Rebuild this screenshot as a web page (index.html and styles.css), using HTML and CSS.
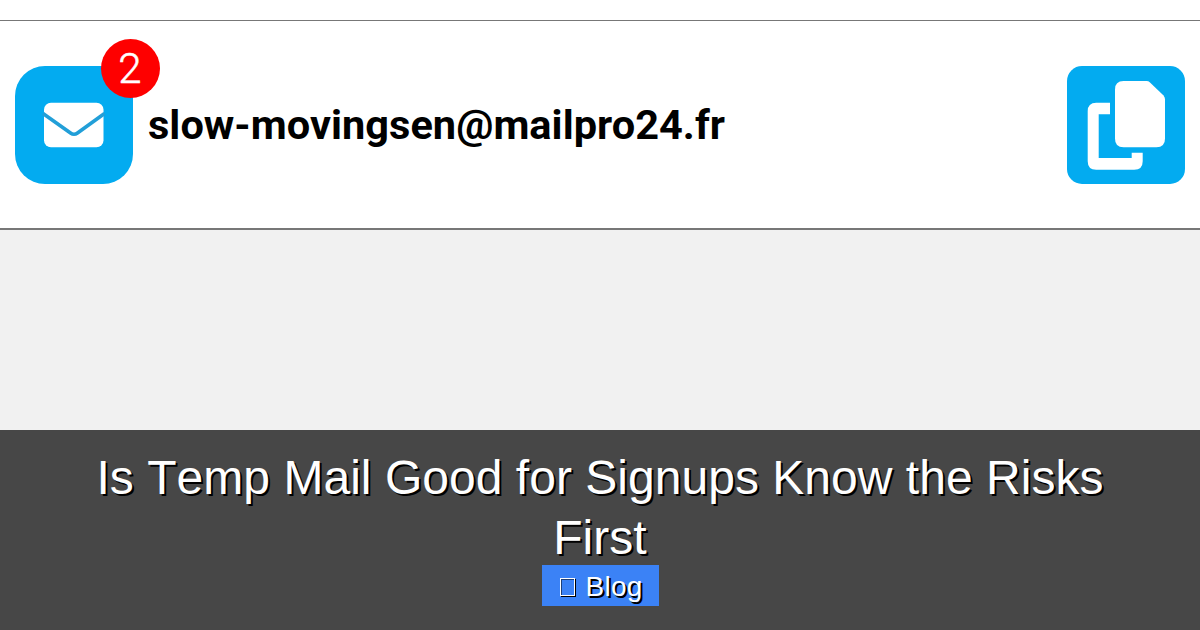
FILE: index.html
```html
<!doctype html>
<html lang="en">
  <head>
    <meta charset="UTF-8">
    <meta name="viewport" content="width=device-width, initial-scale=1.0">
    <title>Is Temp Mail Good for Signups Know the Risks First</title>
    <link rel="stylesheet" href="styles.css">
  </head>
  <body>
    <div class="page">
      <!-- Mailbox address bar -->
      <header class="mailbox">
        <div class="mail-icon">
          <svg width="118" height="118" viewBox="0 0 118 118">
            <rect x="29" y="36.7" width="59.5" height="44.6" rx="7" fill="#fff"/>
            <path d="M28 47.5 L55.5 67 Q59 69.5 62.5 67 L89.5 47.5" fill="none" stroke="#229fd8" stroke-width="3.6"/>
          </svg>
          <span class="badge">2</span>
        </div>
        <div class="address">slow-movingsen@mailpro24.fr</div>
        <div class="copy-icon">
          <svg width="118" height="118" viewBox="0 0 118 118" fill="#fff">
            <path d="M43 36.7 V48.3 H31.7 V92 H64.7 V86.7 H75.7 V95.2 Q75.7 103.7 67.2 103.7 H29.2 Q20.7 103.7 20.7 95.2 V45.2 Q20.7 36.7 29.2 36.7 Z"/>
            <path d="M56.5 15 H79.5 Q81.5 15 83 16.4 L96.3 29.2 Q98 31 98 33.2 V72.8 Q98 81.3 89.5 81.3 H56.5 Q48 81.3 48 72.8 V23.5 Q48 15 56.5 15 Z"/>
          </svg>
        </div>
      </header>

      <!-- Post title -->
      <div class="caption">
        <h1>Is Temp Mail Good for Signups Know the Risks First</h1>
        <div class="tag"><span class="tag-box"></span>Blog</div>
      </div>
    </div>
  </body>
</html>
```

FILE: styles.css
```css
body {
  margin: 0;
  background-color: #fff;
  font-family: "Liberation Sans", Arial, sans-serif;
}
.page {
  display: flex;
  flex-direction: column;
  box-sizing: border-box;
  height: 630px;
  padding-top: 20px;
  overflow: hidden;
  background: linear-gradient(#fff 20px, #f1f1f1 20px);
}
.mailbox {
  display: flex;
  align-items: center;
  box-sizing: border-box;
  height: 210px;
  padding: 0 15px;
  border-top: 1px solid #777;
  border-bottom: 2px solid #777;
  background-color: #fff;
}
.mail-icon, .copy-icon {
  width: 118px;
  height: 118px;
  background-color: #03abf0;
}
.mail-icon {
  position: relative;
  border-radius: 30px;
}
.copy-icon {
  margin-left: auto;
  border-radius: 15px;
}
.mail-icon svg, .copy-icon svg {
  display: block;
}
.badge {
  position: absolute;
  top: -26.5px;
  left: 85.5px;
  width: 59px;
  height: 59px;
  border-radius: 50%;
  background-color: #fe0000;
  color: #fff;
  font: 300 42px/59px Roboto, sans-serif;
  -webkit-text-stroke: 0.5px #fff;
  text-align: center;
}
.address {
  margin-left: 15px;
  color: #000;
  font: bold 41.5px/50px Roboto, sans-serif;
  letter-spacing: 0.04px;
}
.caption {
  box-sizing: border-box;
  height: 200px;
  margin-top: auto;
  padding: 18px 60px 0;
  background-color: #474747;
  color: #fff;
  font-kerning: none;
  text-align: center;
}
h1 {
  margin: 0;
  font-size: 48px;
  font-weight: normal;
  letter-spacing: 0.03px;
  line-height: 60px;
  text-shadow: 2px 2px 0 #000;
}
.tag {
  display: flex;
  align-items: center;
  box-sizing: border-box;
  width: 117px;
  height: 41px;
  margin: -3px auto 0;
  padding: 2px 0 0 18px;
  background-color: #3b82f6;
  font-size: 28px;
  letter-spacing: 0.3px;
  line-height: 41px;
  text-shadow: 2px 2px 0 #000;
}
.tag-box {
  box-sizing: border-box;
  width: 15px;
  height: 18px;
  margin: 1px 11px 0 0;
  border: 1px solid #fff;
  box-shadow: 1px 1px 0 #000, inset 1px 1px 0 #1d3f78;
}
```
